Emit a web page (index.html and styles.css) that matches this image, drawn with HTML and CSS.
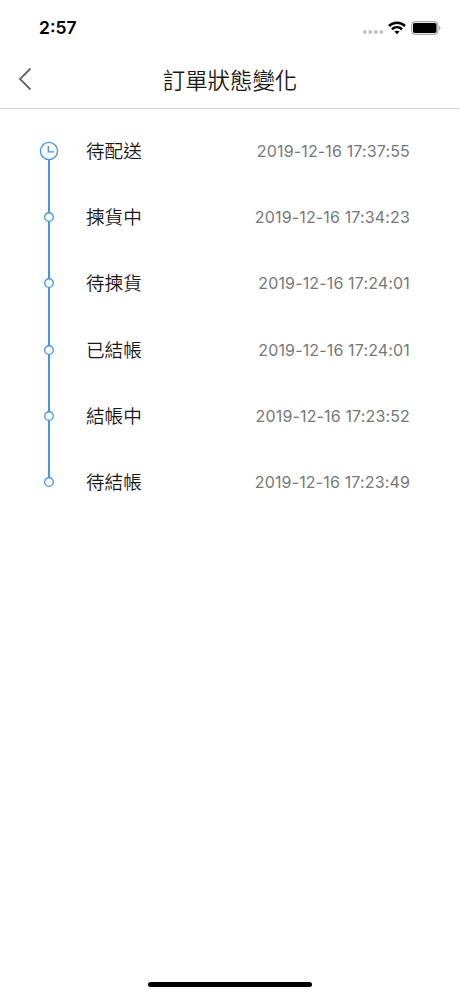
FILE: index.html
```html
<!DOCTYPE html>
<html lang="zh-Hant">
<head>
<meta charset="utf-8">
<title>訂單狀態變化</title>
<link rel="stylesheet" href="styles.css">
</head>
<body>
<div class="screen">
  <header class="status-bar">
    <span class="clock">2:57</span>
    <div class="indicators">
      <svg class="signal" width="22" height="6" viewBox="0 0 22 6" fill="#c4c4c6"><circle cx="2.8" cy="3" r="2"/><circle cx="8.3" cy="3" r="2"/><circle cx="13.8" cy="3" r="2"/><circle cx="19.3" cy="3" r="2"/></svg>
      <svg class="wifi" width="18" height="14" viewBox="0 0 18 14" fill="none" stroke="#000" stroke-width="2.5"><path d="M1 5C5.5.7 12.5.7 17 5"/><path d="M3.9 8.2c3-2.7 7.2-2.7 10.2 0"/><path d="M6.5 10.6c1.5-1.2 3.5-1.2 5 0L9 13.3z" fill="#000" stroke="none"/></svg>
      <svg class="battery" width="30" height="14" viewBox="0 0 30 14"><rect x=".6" y=".6" width="26.3" height="12.8" rx="3.8" fill="none" stroke="#a8a8a8" stroke-width="1.2"/><rect x="2" y="2" width="23.5" height="10" rx="1.8"/><path d="M28.1 4.8c1.8.7 1.8 3.7 0 4.4z" fill="#a0a0a0"/></svg>
    </div>
  </header>
  <nav class="nav-bar">
    <svg class="back" width="14" height="24" viewBox="0 0 14 24" fill="none" stroke="#666" stroke-width="1.8"><path d="M12.5 1.5 2 12l10.5 10.5"/></svg>
    <h1 class="title">訂單狀態變化</h1>
  </nav>
  <ol class="timeline">
    <li class="step"><span class="marker"><svg width="20" height="20" viewBox="0 0 20 20"><circle cx="10" cy="10" r="8.6"/><path d="M9.3 5v5.8h5.6"/></svg></span><span class="name">待配送</span><time>2019-12-16 17:37:55</time></li>
    <li class="step"><span class="marker"><svg width="12" height="12" viewBox="0 0 12 12"><circle cx="6" cy="6" r="4.3"/></svg></span><span class="name">揀貨中</span><time>2019-12-16 17:34:23</time></li>
    <li class="step"><span class="marker"><svg width="12" height="12" viewBox="0 0 12 12"><circle cx="6" cy="6" r="4.3"/></svg></span><span class="name">待揀貨</span><time>2019-12-16 17:24:01</time></li>
    <li class="step"><span class="marker"><svg width="12" height="12" viewBox="0 0 12 12"><circle cx="6" cy="6" r="4.3"/></svg></span><span class="name">已結帳</span><time>2019-12-16 17:24:01</time></li>
    <li class="step"><span class="marker"><svg width="12" height="12" viewBox="0 0 12 12"><circle cx="6" cy="6" r="4.3"/></svg></span><span class="name">結帳中</span><time>2019-12-16 17:23:52</time></li>
    <li class="step"><span class="marker"><svg width="12" height="12" viewBox="0 0 12 12"><circle cx="6" cy="6" r="4.3"/></svg></span><span class="name">待結帳</span><time>2019-12-16 17:23:49</time></li>
  </ol>
  <div class="home-indicator"></div>
</div>
</body>
</html>
```
FILE: styles.css
```css
* { box-sizing: border-box; }
body { margin: 0; background: #fff; font-family: Inter, "Noto Sans CJK TC", sans-serif; }
.screen { width: 460px; height: 996px; display: flex; flex-direction: column; }
.status-bar { height: 54px; display: flex; justify-content: space-between; padding: 0 19px 0 39px; }
.clock { font-size: 17.5px; font-weight: 600; line-height: 56px; color: #000; }
.indicators { display: flex; align-items: center; height: 55px; }
.signal { margin: 9px 4px 0 0; }
.wifi { margin-right: 5px; }
.nav-bar { height: 55px; display: grid; grid-template-columns: 60px 1fr 60px; align-items: center; border-bottom: 1px solid #d2d2d2; }
.back { margin: 0 0 4px 18px; }
.title { margin: 0; text-align: center; font-size: 22.4px; line-height: 54px; font-weight: 350; color: #1c1817; }
.timeline { list-style: none; margin: 0; padding: 9px 50px 0 39px; }
.step { height: 66.2px; display: flex; align-items: center; }
.marker { position: relative; width: 20px; height: 100%; display: flex; align-items: center; justify-content: center; margin-right: 27px; }
.marker::before { content: ""; position: absolute; left: 9px; top: 0; bottom: 0; width: 2px; background: #4294ec; }
.step:first-child .marker::before { top: 50%; }
.step:last-child .marker::before { bottom: 50%; }
.marker svg { position: relative; fill: #fff; stroke: #4294ec; stroke-width: 1.35; }
.marker path { fill: none; }
.name { flex: 1; padding-bottom: 3px; font-size: 18.6px; font-weight: 350; color: #1c1817; }
time { font-size: 16px; letter-spacing: .15px; color: #777; }
.home-indicator { width: 164px; height: 5px; border-radius: 3px; background: #000; margin: auto auto 9px; }
```
